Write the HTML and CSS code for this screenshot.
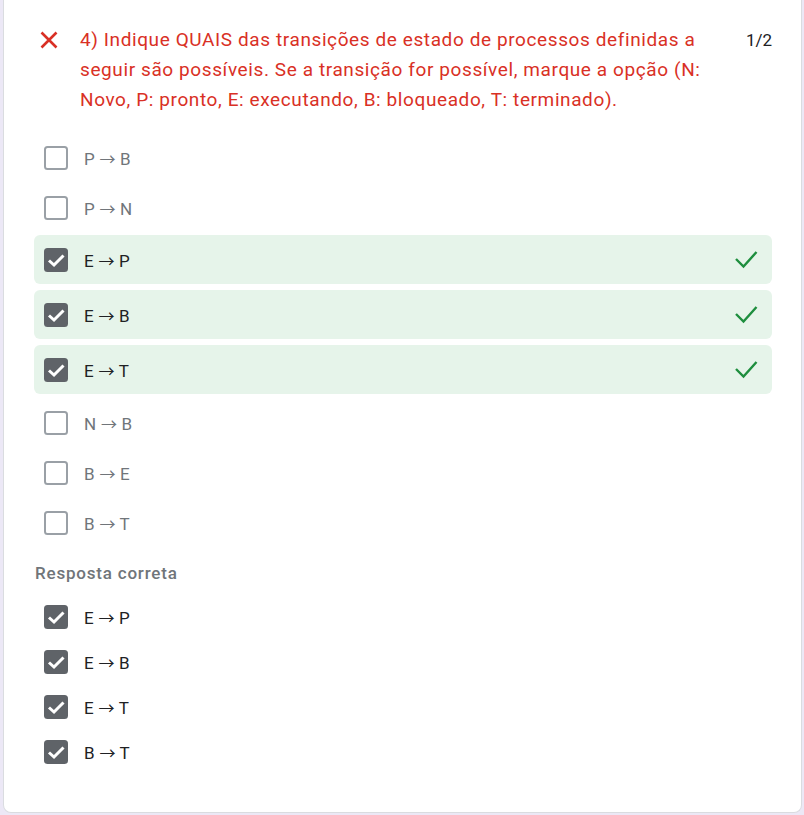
FILE: index.html
```html
<!DOCTYPE html>
<html lang="pt">
<head>
<meta charset="utf-8">
<title>Questão 4</title>
<link rel="stylesheet" href="styles.css">
</head>
<body>
<div class="card">
  <div class="header">
    <svg class="x-icon" width="24" height="24" viewBox="0 0 24 24"><path d="M4.5 4.5 L19.5 19.5 M19.5 4.5 L4.5 19.5" stroke="#d93025" stroke-width="2.6" fill="none"/></svg>
    <div class="question">4) Indique QUAIS das transições de estado de processos definidas a seguir são possíveis. Se a transição for possível, marque a opção (N: Novo, P: pronto, E: executando, B: bloqueado, T: terminado).</div>
    <div class="score">1/2</div>
  </div>

  <div class="options">
    <div class="opt"><span class="box"></span><span class="label">P <span class="arrow">→</span> B</span></div>
    <div class="opt"><span class="box"></span><span class="label">P <span class="arrow">→</span> N</span></div>
    <div class="opt correct"><span class="box checked"><svg viewBox="0 0 24 24" width="24" height="24"><path d="M5 12.5 L10 17 L19.5 7.5" stroke="#fff" stroke-width="3" fill="none"/></svg></span><span class="label">E <span class="arrow">→</span> P</span><svg class="ok" width="24" height="20" viewBox="0 0 24 20"><path d="M2 9 L9.5 16.5 L22.5 2" stroke="#1e8e3e" stroke-width="2.4" fill="none"/></svg></div>
    <div class="opt correct"><span class="box checked"><svg viewBox="0 0 24 24" width="24" height="24"><path d="M5 12.5 L10 17 L19.5 7.5" stroke="#fff" stroke-width="3" fill="none"/></svg></span><span class="label">E <span class="arrow">→</span> B</span><svg class="ok" width="24" height="20" viewBox="0 0 24 20"><path d="M2 9 L9.5 16.5 L22.5 2" stroke="#1e8e3e" stroke-width="2.4" fill="none"/></svg></div>
    <div class="opt correct"><span class="box checked"><svg viewBox="0 0 24 24" width="24" height="24"><path d="M5 12.5 L10 17 L19.5 7.5" stroke="#fff" stroke-width="3" fill="none"/></svg></span><span class="label">E <span class="arrow">→</span> T</span><svg class="ok" width="24" height="20" viewBox="0 0 24 20"><path d="M2 9 L9.5 16.5 L22.5 2" stroke="#1e8e3e" stroke-width="2.4" fill="none"/></svg></div>
    <div class="opt"><span class="box"></span><span class="label">N <span class="arrow">→</span> B</span></div>
    <div class="opt"><span class="box"></span><span class="label">B <span class="arrow">→</span> E</span></div>
    <div class="opt"><span class="box"></span><span class="label">B <span class="arrow">→</span> T</span></div>
  </div>

  <div class="answer-title">Resposta correta</div>
  <div class="answers">
    <div class="ans"><span class="box checked"><svg viewBox="0 0 24 24" width="24" height="24"><path d="M5 12.5 L10 17 L19.5 7.5" stroke="#fff" stroke-width="3" fill="none"/></svg></span><span class="label">E <span class="arrow">→</span> P</span></div>
    <div class="ans"><span class="box checked"><svg viewBox="0 0 24 24" width="24" height="24"><path d="M5 12.5 L10 17 L19.5 7.5" stroke="#fff" stroke-width="3" fill="none"/></svg></span><span class="label">E <span class="arrow">→</span> B</span></div>
    <div class="ans"><span class="box checked"><svg viewBox="0 0 24 24" width="24" height="24"><path d="M5 12.5 L10 17 L19.5 7.5" stroke="#fff" stroke-width="3" fill="none"/></svg></span><span class="label">E <span class="arrow">→</span> T</span></div>
    <div class="ans"><span class="box checked"><svg viewBox="0 0 24 24" width="24" height="24"><path d="M5 12.5 L10 17 L19.5 7.5" stroke="#fff" stroke-width="3" fill="none"/></svg></span><span class="label">B <span class="arrow">→</span> T</span></div>
  </div>
</div>
</body>
</html>
```

FILE: styles.css
```css
html, body {
  margin: 0;
  padding: 0;
}
body {
  background: #ece8f6;
  font-family: Roboto, "Liberation Sans", Arial, sans-serif;
  height: 815px;
  overflow: hidden;
}
.card {
  box-sizing: border-box;
  margin-left: 3px;
  width: 799px;
  height: 813px;
  background: #fff;
  border: 1px solid #dadce0;
  border-top: none;
  border-radius: 0 0 8px 8px;
  padding: 25px 29px 0 30px;
}
.header {
  display: flex;
  align-items: flex-start;
}
.x-icon {
  flex: none;
  margin: 3px 0 0 3px;
}
.question {
  flex: 1;
  margin-left: 19px;
  color: #d93025;
  font-size: 19px;
  letter-spacing: 0.6px;
  line-height: 30px;
}
.score {
  flex: none;
  margin-left: 24px;
  color: #202124;
  font-size: 17px;
  line-height: 30px;
}
.options {
  margin-top: 18px;
  display: flex;
  flex-direction: column;
}
.opt {
  height: 50px;
  display: flex;
  align-items: center;
  padding-left: 10px;
  padding-right: 14px;
  border-radius: 6px;
}
.opt.correct {
  height: 49px;
  background: #e6f4ea;
  margin-top: 2px;
  margin-bottom: 4px;
}
.opt.correct + .opt.correct {
  margin-top: 2px;
}
.box {
  box-sizing: border-box;
  flex: none;
  width: 24px;
  height: 24px;
  border: 2.5px solid #9aa0a6;
  border-radius: 3.5px;
  display: flex;
  align-items: center;
  justify-content: center;
}
.box.checked {
  border: none;
  background: #5f6368;
}
.label {
  margin-left: 16px;
  font-size: 17px;
  letter-spacing: 0.3px;
  color: #70757a;
  flex: 1;
}
.arrow {
  font-family: "Noto Sans CJK SC", "DejaVu Sans", sans-serif;
  font-size: 16px;
  letter-spacing: 0;
}
.correct .label,
.ans .label {
  color: #202124;
}
.ok {
  flex: none;
}
.answer-title {
  margin-top: 13px;
  margin-left: 1px;
  height: 24px;
  line-height: 24px;
  font-size: 17px;
  letter-spacing: 0.8px;
  font-weight: 500;
  color: #70757a;
}
.answers {
  margin-top: 9px;
  display: flex;
  flex-direction: column;
}
.ans {
  height: 45px;
  display: flex;
  align-items: center;
  padding-left: 10px;
}
```
